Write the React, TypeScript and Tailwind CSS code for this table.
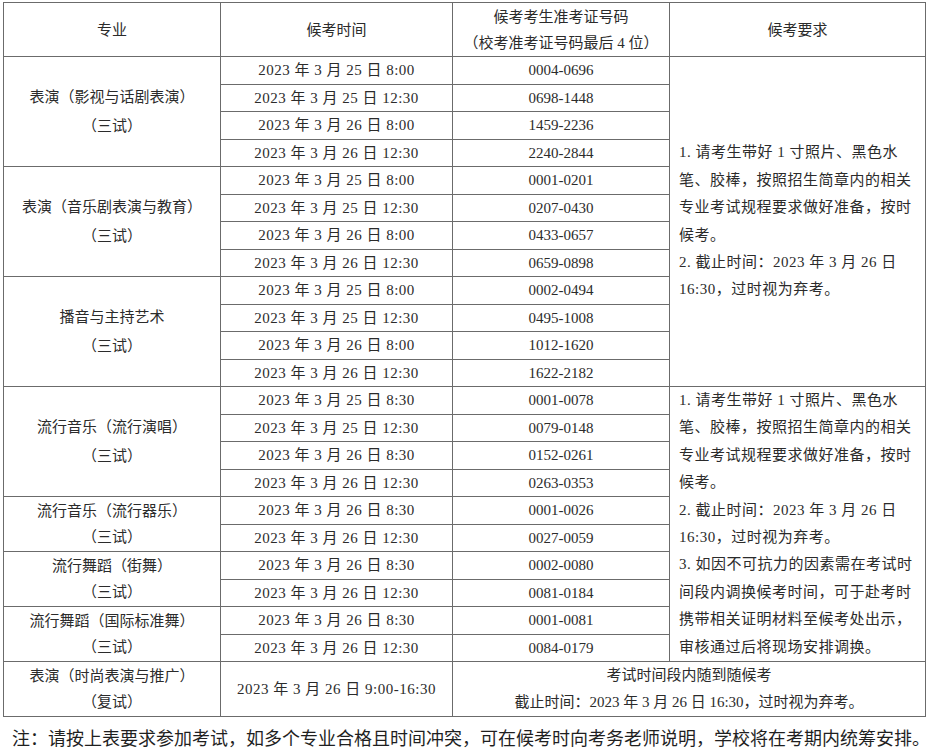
import React from "react";

type Group = { name: string[]; rows: [string, string][] };

const groups: Group[] = [
  {
    name: ["表演（影视与话剧表演）", "（三试）"],
    rows: [
      ["2023 年 3 月 25 日 8:00", "0004-0696"],
      ["2023 年 3 月 25 日 12:30", "0698-1448"],
      ["2023 年 3 月 26 日 8:00", "1459-2236"],
      ["2023 年 3 月 26 日 12:30", "2240-2844"],
    ],
  },
  {
    name: ["表演（音乐剧表演与教育）", "（三试）"],
    rows: [
      ["2023 年 3 月 25 日 8:00", "0001-0201"],
      ["2023 年 3 月 25 日 12:30", "0207-0430"],
      ["2023 年 3 月 26 日 8:00", "0433-0657"],
      ["2023 年 3 月 26 日 12:30", "0659-0898"],
    ],
  },
  {
    name: ["播音与主持艺术", "（三试）"],
    rows: [
      ["2023 年 3 月 25 日 8:00", "0002-0494"],
      ["2023 年 3 月 25 日 12:30", "0495-1008"],
      ["2023 年 3 月 26 日 8:00", "1012-1620"],
      ["2023 年 3 月 26 日 12:30", "1622-2182"],
    ],
  },
  {
    name: ["流行音乐（流行演唱）", "（三试）"],
    rows: [
      ["2023 年 3 月 25 日 8:30", "0001-0078"],
      ["2023 年 3 月 25 日 12:30", "0079-0148"],
      ["2023 年 3 月 26 日 8:30", "0152-0261"],
      ["2023 年 3 月 26 日 12:30", "0263-0353"],
    ],
  },
  {
    name: ["流行音乐（流行器乐）", "（三试）"],
    rows: [
      ["2023 年 3 月 26 日 8:30", "0001-0026"],
      ["2023 年 3 月 26 日 12:30", "0027-0059"],
    ],
  },
  {
    name: ["流行舞蹈（街舞）", "（三试）"],
    rows: [
      ["2023 年 3 月 26 日 8:30", "0002-0080"],
      ["2023 年 3 月 26 日 12:30", "0081-0184"],
    ],
  },
  {
    name: ["流行舞蹈（国际标准舞）", "（三试）"],
    rows: [
      ["2023 年 3 月 26 日 8:30", "0001-0081"],
      ["2023 年 3 月 26 日 12:30", "0084-0179"],
    ],
  },
];

const reqBase = [
  "1. 请考生带好 1 寸照片、黑色水",
  "笔、胶棒，按照招生简章内的相关",
  "专业考试规程要求做好准备，按时",
  "候考。",
  "2. 截止时间：2023 年 3 月 26 日",
  "16:30，过时视为弃考。",
];

const reqExtra = [
  "3. 如因不可抗力的因素需在考试时",
  "间段内调换候考时间，可于赴考时",
  "携带相关证明材料至候考处出示，",
  "审核通过后将现场安排调换。",
];

// requirement cell starts at group index 0 (12 rows) and group index 3 (10 rows)
const reqAt: Record<number, { span: number; lines: string[] }> = {
  0: { span: 12, lines: reqBase },
  3: { span: 10, lines: [...reqBase, ...reqExtra] },
};

const cell = "border border-[#6b6b6b] p-0 text-center align-middle";

export default function App() {
  return (
    <div
      className="w-[930px] h-[755px] bg-white text-[#2b2b2b] text-[15px] leading-[20px] pt-[2px] pl-[3px]"
      style={{ fontFamily: '"Liberation Serif", "Noto Sans CJK SC", serif' }}
    >
      <table className="border-collapse table-fixed w-[922px]">
        <colgroup>
          <col className="w-[217px]" />
          <col className="w-[232px]" />
          <col className="w-[217px]" />
          <col className="w-[256px]" />
        </colgroup>
        <tbody>
          <tr className="h-[54px]">
            <td className={cell}>专业</td>
            <td className={cell}>候考时间</td>
            <td className={`${cell} leading-[26px]`}>
              <div>候考考生准考证号码</div>
              <div>（校考准考证号码最后 4 位）</div>
            </td>
            <td className={cell}>候考要求</td>
          </tr>
          {groups.map((g, gi) =>
            g.rows.map(([time, code], ri) => (
              <tr key={`${gi}-${ri}`} className="h-[27.5px]">
                {ri === 0 && (
                  <td className={cell} rowSpan={g.rows.length}>
                    {g.name.map((n) => (
                      <div key={n} className={g.rows.length > 2 ? "leading-[29px]" : "leading-[26px]"}>
                        {n}
                      </div>
                    ))}
                  </td>
                )}
                <td className={`${cell} whitespace-nowrap tracking-[0.5px]`}>{time}</td>
                <td className={cell}>{code}</td>
                {ri === 0 && reqAt[gi] && (
                  <td className={`${cell} text-left pl-[9px] leading-[27.4px]`} rowSpan={reqAt[gi].span}>
                    {reqAt[gi].lines.map((l) => (
                      <div key={l} className="whitespace-nowrap tracking-[0.5px]">
                        {l}
                      </div>
                    ))}
                  </td>
                )}
              </tr>
            ))
          )}
          <tr className="h-[55px]">
            <td className={`${cell} leading-[26px]`}>
              <div>表演（时尚表演与推广）</div>
              <div>（复试）</div>
            </td>
            <td className={`${cell} whitespace-nowrap tracking-[0.5px]`}>2023 年 3 月 26 日 9:00-16:30</td>
            <td className={`${cell} leading-[27px]`} colSpan={2}>
              <div>考试时间段内随到随候考</div>
              <div>截止时间：2023 年 3 月 26 日 16:30，过时视为弃考。</div>
            </td>
          </tr>
        </tbody>
      </table>
      <p className="mt-[10px] pl-[9px] text-[18px] leading-[24px] whitespace-nowrap text-[#1f1f1f]">
        注：请按上表要求参加考试，如多个专业合格且时间冲突，可在候考时向考务老师说明，学校将在考期内统筹安排。
      </p>
    </div>
  );
}
